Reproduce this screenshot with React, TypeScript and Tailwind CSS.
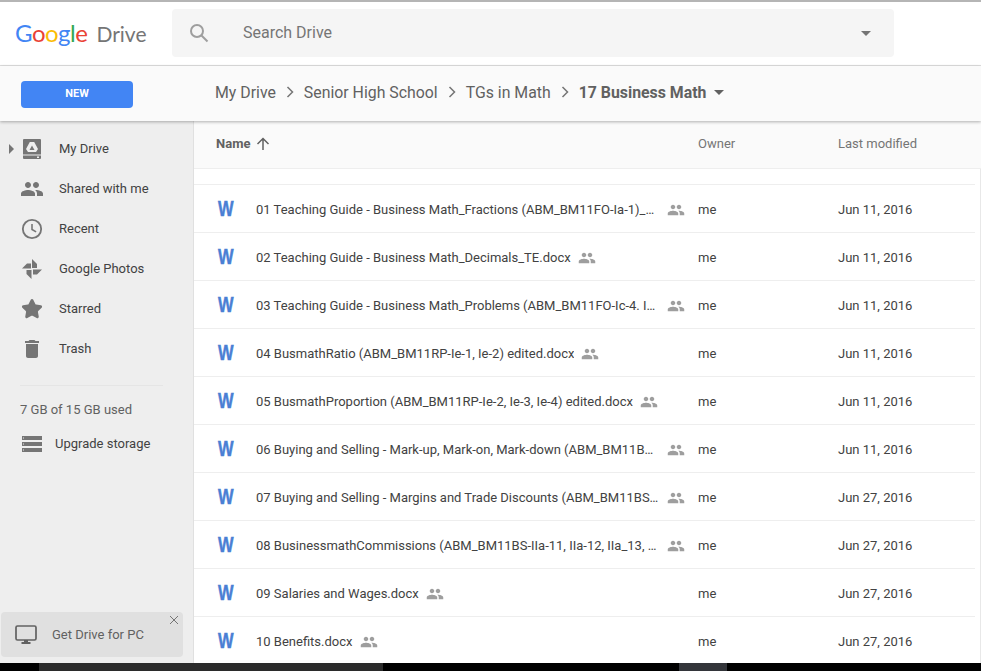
import { Star } from "lucide-react"

const files = [
  { name: "01 Teaching Guide - Business Math_Fractions (ABM_BM11FO-Ia-1)_Mb-2 edited final.docx", date: "Jun 11, 2016" },
  { name: "02 Teaching Guide - Business Math_Decimals_TE.docx", date: "Jun 11, 2016" },
  { name: "03 Teaching Guide - Business Math_Problems (ABM_BM11FO-Ic-4. Id-5 edited final.docx", date: "Jun 11, 2016" },
  { name: "04 BusmathRatio (ABM_BM11RP-Ie-1, Ie-2) edited.docx", date: "Jun 11, 2016" },
  { name: "05 BusmathProportion (ABM_BM11RP-Ie-2, Ie-3, Ie-4) edited.docx", date: "Jun 11, 2016" },
  { name: "06 Buying and Selling - Mark-up, Mark-on, Mark-down (ABM_BM11BS-Ig-1, Ig-2) edited.docx", date: "Jun 11, 2016" },
  { name: "07 Buying and Selling - Margins and Trade Discounts (ABM_BM11BS-Ih-3, Ih-4) edited.docx", date: "Jun 27, 2016" },
  { name: "08 BusinessmathCommissions (ABM_BM11BS-IIa-11, IIa-12, IIa_13, and IIa-14).docx", date: "Jun 27, 2016" },
  { name: "09 Salaries and Wages.docx", date: "Jun 27, 2016" },
  { name: "10 Benefits.docx", date: "Jun 27, 2016" },
]

function PeopleIcon({ className }: { className: string }) {
  return (
    <svg viewBox="0 0 24 24" fill="currentColor" className={className}>
      <path d="M16 11c1.66 0 2.99-1.34 2.99-3S17.66 5 16 5c-1.66 0-3 1.34-3 3s1.34 3 3 3zm-8 0c1.66 0 2.99-1.34 2.99-3S9.66 5 8 5C6.34 5 5 6.34 5 8s1.34 3 3 3zm0 2c-2.33 0-7 1.17-7 3.5V19h14v-2.5c0-2.33-4.67-3.5-7-3.5zm8 0c-.29 0-.62.02-.97.05 1.16.84 1.97 1.97 1.97 3.45V19h6v-2.5c0-2.33-4.67-3.5-7-3.5z" />
    </svg>
  )
}

function DriveIcon() {
  return (
    <svg viewBox="0 0 18 20" className="h-5 w-[18px]">
      <path fill="#757575" d="M1 0h16a1 1 0 0 1 1 1v14.500H0V1a1 1 0 0 1 1-1z" />
      <path fill="#757575" d="M0 16.500h18V19a1 1 0 0 1-1 1H1a1 1 0 0 1-1-1z" />
      <path fill="#eeeeee" d="M6.800 3h4.400L15 10l-2 3H5l-2-3z" />
      <path fill="#757575" d="M9 6.500L11.500 11h-5z" />
      <rect x="14" y="17.500" width="2" height="1.500" fill="#eeeeee" />
    </svg>
  )
}

function ClockIcon() {
  return (
    <svg viewBox="0 0 24 24" fill="none" stroke="#757575" className="h-[22px] w-[22px]">
      <circle cx="12" cy="12" r="10" strokeWidth="2" />
      <path d="M12 6.500V12.500L16.500 15.200" strokeWidth="1.700" />
    </svg>
  )
}

function PhotosIcon() {
  return (
    <svg viewBox="0 0 20 20" fill="#757575" className="h-5 w-5">
      <path d="M10 0l5 5v4h-5z" />
      <path d="M20 10.500l-5 5h-4v-5z" />
      <path d="M9.500 20l-5-5v-4h5z" />
      <path d="M0 9.500l5-5h4v5z" />
    </svg>
  )
}

function StorageIcon() {
  return (
    <svg viewBox="0 0 20 16" fill="#757575" className="h-4 w-5">
      <path d="M0 0h20v4H0zm0 6h20v4H0zm0 6h20v4H0z" />
      <path fill="#eeeeee" d="M1 1.500h1v1H1zm0 6h1v1H1zm0 6h1v1H1z" />
    </svg>
  )
}

function MonitorIcon() {
  return (
    <svg viewBox="0 0 22 20" className="h-5 w-[22px]">
      <rect x="1" y="1" width="20" height="14" rx="1.500" fill="none" stroke="#616161" strokeWidth="1.700" />
      <path fill="#616161" d="M9 15h4v2h2.500v2h-9v-2H9z" />
    </svg>
  )
}

function TrashIcon() {
  return (
    <svg viewBox="0 0 24 24" fill="#757575" className="h-6 w-6">
      <path d="M6 19c0 1.100.9 2 2 2h8c1.100 0 2-.9 2-2V7H6v12zM19 4h-3.500l-1-1h-5l-1 1H5v2h14V4z" />
    </svg>
  )
}

const nav = [
  { label: "My Drive", icon: <DriveIcon /> },
  { label: "Shared with me", icon: <PeopleIcon className="h-6 w-6 text-[#757575]" /> },
  { label: "Recent", icon: <ClockIcon /> },
  { label: "Google Photos", icon: <PhotosIcon /> },
  { label: "Starred", icon: <Star className="h-[22px] w-[22px] fill-[#757575] text-[#757575]" /> },
  { label: "Trash", icon: <TrashIcon /> },
]

function Sidebar() {
  return (
    <aside className="flex w-[194px] shrink-0 flex-col border-r border-[#e0e0e0] bg-[#eeeeee] pt-[8px]">
      {nav.map((item, i) => (
        <div key={item.label} className="relative flex h-10 shrink-0 items-center text-[13px] text-[#424242]">
          {i === 0 && <span className="absolute left-[9px] top-[15px] h-0 w-0 border-y-[5px] border-l-[5px] border-y-transparent border-l-[#757575]" />}
          <span className="flex w-[64px] justify-center">{item.icon}</span>
          <span className="-ml-[5px]">{item.label}</span>
        </div>
      ))}
      <div className="ml-[20px] mt-[16px] w-[143px] border-t border-[#e5e5e5]" />
      <p className="ml-[20px] mt-[16px] text-[13px] leading-[16px] text-[#616161]">7 GB of 15 GB used</p>
      <div className="ml-[22px] mt-[18px] flex items-center text-[13px] leading-[16px] text-[#424242]">
        <StorageIcon />
        <span className="ml-[13px]">Upgrade storage</span>
      </div>
      <div className="relative mb-[6px] ml-[1px] mt-auto flex h-[45px] w-[182px] items-center rounded-sm bg-[#e0e0e0] pl-[14px] text-[13px] text-[#616161]">
        <MonitorIcon />
        <span className="ml-[15px]">Get Drive for PC</span>
        <svg viewBox="0 0 8 8" className="absolute right-[5px] top-[4px] h-2 w-2" stroke="#757575" strokeWidth="1">
          <path d="M0 0l8 8M8 0L0 8" />
        </svg>
      </div>
    </aside>
  )
}

function FileRow({ name, date }: { name: string; date: string }) {
  return (
    <div className="mr-[5px] flex h-12 shrink-0 items-center border-b border-[#eeeeee] pt-[3px] text-[13px] text-[#424242]">
      <span className="ml-[24px] flex w-[38px] shrink-0 pb-[2px]">
        <span className="origin-left scale-x-75 font-['Liberation_Sans',sans-serif] text-[22px] font-bold leading-none text-[#4a7fd4] [-webkit-text-stroke:0.5px_#4a7fd4]">W</span>
      </span>
      <div className="flex w-[442px] shrink-0 items-center">
        <span className="max-w-[404px] truncate">{name}</span>
        <PeopleIcon className="ml-[7px] h-[18px] w-[18px] shrink-0 text-[#9e9e9e]" />
      </div>
      <span className="w-[140px] shrink-0">me</span>
      <span>{date}</span>
    </div>
  )
}

function Chevron() {
  return (
    <svg viewBox="0 0 8 12" fill="none" stroke="#757575" strokeWidth="1.500" className="mx-[10px] h-3 w-2">
      <path d="M1.500 1l5 5-5 5" />
    </svg>
  )
}

export default function App() {
  return (
    <div className="flex h-[671px] w-[981px] flex-col overflow-hidden bg-white font-['Roboto',sans-serif]">
      <div className="h-[2px] shrink-0 bg-[#b5b5b5]" />
      <header className="flex h-[64px] shrink-0 items-center border-b border-[#e0e0e0] bg-white pb-[1px]">
        <div className="flex w-[172px] items-baseline pl-[15px] font-['Lato',sans-serif]">
          <span className="text-[24px] leading-none tracking-[-0.5px]">
            <span className="text-[#4285f4]">G</span>
            <span className="text-[#ea4335]">o</span>
            <span className="text-[#fbbc05]">o</span>
            <span className="text-[#4285f4]">g</span>
            <span className="text-[#34a853]">l</span>
            <span className="text-[#ea4335]">e</span>
          </span>
          <span className="ml-[9px] text-[21px] leading-none text-[#757575]">Drive</span>
        </div>
        <div className="flex h-12 w-[722px] items-center rounded-sm bg-[#f5f5f5] pl-[17px] pr-[23px]">
          <svg viewBox="0 0 20 20" fill="none" stroke="#9e9e9e" strokeWidth="2" className="h-[20px] w-[20px]">
            <circle cx="8" cy="8" r="6" />
            <path d="M12.500 12.500L18.500 18.500" />
          </svg>
          <span className="ml-[34px] text-[16px] text-[#757575]">Search Drive</span>
          <span className="ml-auto h-0 w-0 border-x-[5px] border-t-[5px] border-x-transparent border-t-[#757575]" />
        </div>
      </header>

      <div className="relative z-10 flex h-[55px] shrink-0 items-center bg-[#fafafa] shadow-[0_1px_3px_rgba(0,0,0,0.3)]">
        <div className="w-[215px] pl-[21px]">
          <button className="mt-px flex h-[27px] w-[112px] items-center justify-center rounded-sm bg-[#4285f4] text-[11px] font-bold text-white">NEW</button>
        </div>
        <nav className="flex items-center pb-[2px] text-[15.85px] text-[#616161]">
          <span>My Drive</span>
          <Chevron />
          <span>Senior High School</span>
          <Chevron />
          <span>TGs in Math</span>
          <Chevron />
          <span className="font-bold">17 Business Math</span>
          <span className="ml-[8px] h-0 w-0 border-x-[5px] border-t-[5px] border-x-transparent border-t-[#616161]" />
        </nav>
      </div>

      <div className="flex min-h-0 flex-1">
        <Sidebar />
        <main className="flex min-w-0 flex-1 flex-col border-r border-[#e8e8e8]">
          <div className="-mr-px flex h-[48px] shrink-0 items-center border-b border-[#eeeeee] bg-[#fafafa] pb-[2px] text-[13px] text-[#757575]">
            <div className="flex w-[504px] items-center pl-[22px]">
              <span className="font-bold text-[#616161]">Name</span>
              <svg viewBox="0 0 14 14" fill="none" stroke="#616161" strokeWidth="1.500" className="ml-[6px] h-[14px] w-[14px]">
                <path d="M7 13V1.500M1.500 7L7 1.500 12.500 7" />
              </svg>
            </div>
            <span className="w-[140px]">Owner</span>
            <span>Last modified</span>
          </div>
          <div className="mr-[5px] h-4 shrink-0 border-b border-[#eeeeee]" />
          {files.map((f) => (
            <FileRow key={f.name} name={f.name} date={f.date} />
          ))}
        </main>
      </div>

      <div className="flex h-2 shrink-0 bg-black">
        <div className="ml-[39px] w-[344px] bg-[#2b2b2b]" />
        <div className="ml-[296px] w-[48px] bg-[#33353a]" />
      </div>
    </div>
  )
}
